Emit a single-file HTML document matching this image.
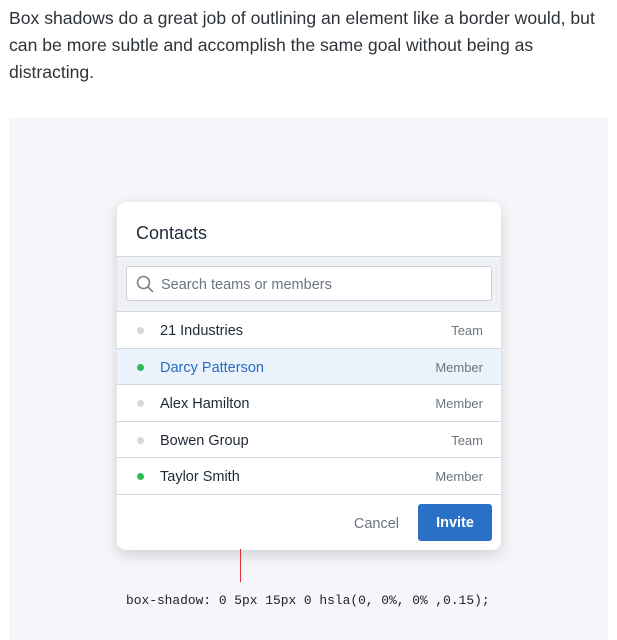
<!DOCTYPE html>
<html><head><style>
body{margin:0;background:#fff;font-family:"Liberation Sans",sans-serif;width:617px;height:640px;overflow:hidden;position:relative}
p{position:absolute;left:9px;top:5px;margin:0;width:600px;font-size:17.6px;line-height:27px;color:#2d3338}
.bg{position:absolute;left:9px;top:118px;width:599px;height:522px;background:#f5f6f9}
.card{position:absolute;left:117px;top:202px;width:384px;height:348px;background:#fff;border-radius:9px;box-shadow:0 5px 15px 0 rgba(0,0,0,.15);overflow:hidden}
.hd{height:55px;border-bottom:1px solid #d3d9e0;font-size:18px;color:#1f2a36;padding-left:19px;line-height:62px;box-sizing:border-box}
.sr{height:55px;background:#eef0f3;border-bottom:1px solid #d3d9e0;box-sizing:border-box;padding:9px 9px 0}
.in{height:35px;background:#fff;border:1px solid #c9d0d8;border-radius:3px;box-sizing:border-box;position:relative;font-size:14.5px;color:#6b7580;line-height:36px;padding-left:34px}
.row{height:36.6px;border-bottom:1px solid #d3d9e0;box-sizing:border-box;position:relative;font-size:14.5px;color:#1f2a36;line-height:39px;padding-left:43px}
.row i{position:absolute;left:20px;top:15px;width:7px;height:7px;border-radius:50%;background:#d6d8db}
.row i.g{background:#2fb85a}
.row span{position:absolute;right:18px;top:0;font-size:13px;color:#6b7580;line-height:37px}
.sel{background:#eaf3fb;color:#2a6cbf}
.ft{position:relative;height:55px}
.cancel{position:absolute;right:102px;top:21px;font-size:14.5px;color:#6b7580}
.inv{position:absolute;right:9px;top:9px;width:74px;height:37px;background:#2a70c6;border-radius:3px;color:#fff;font-weight:bold;font-size:14.5px;text-align:center;line-height:39px}
.line{position:absolute;left:240px;top:549px;width:1px;height:33px;background:#e0303a}
code{position:absolute;left:126px;top:593px;font-family:"Liberation Mono",monospace;font-size:12.9px;color:#222}
</style></head><body>
<p>Box shadows do a great job of outlining an element like a border would, but can be more subtle and accomplish the same goal without being as distracting.</p>
<div class="bg"></div>
<div class="card">
<div class="hd">Contacts</div>
<div class="sr"><div class="in"><svg style="position:absolute;left:9px;top:8px" width="18" height="18" viewBox="0 0 18 18" fill="none" stroke="#7b8590" stroke-width="1.6"><circle cx="7.5" cy="7.5" r="6"/><path d="M12 12l5 5"/></svg>Search teams or members</div></div>
<div class="row"><i></i>21 Industries<span>Team</span></div>
<div class="row sel"><i class="g"></i>Darcy Patterson<span>Member</span></div>
<div class="row"><i></i>Alex Hamilton<span>Member</span></div>
<div class="row"><i></i>Bowen Group<span>Team</span></div>
<div class="row"><i class="g"></i>Taylor Smith<span>Member</span></div>
<div class="ft"><div class="cancel">Cancel</div><div class="inv">Invite</div></div>
</div>
<div class="line"></div>
<code>box-shadow: 0 5px 15px 0 hsla(0, 0%, 0% ,0.15);</code>
</body></html>
